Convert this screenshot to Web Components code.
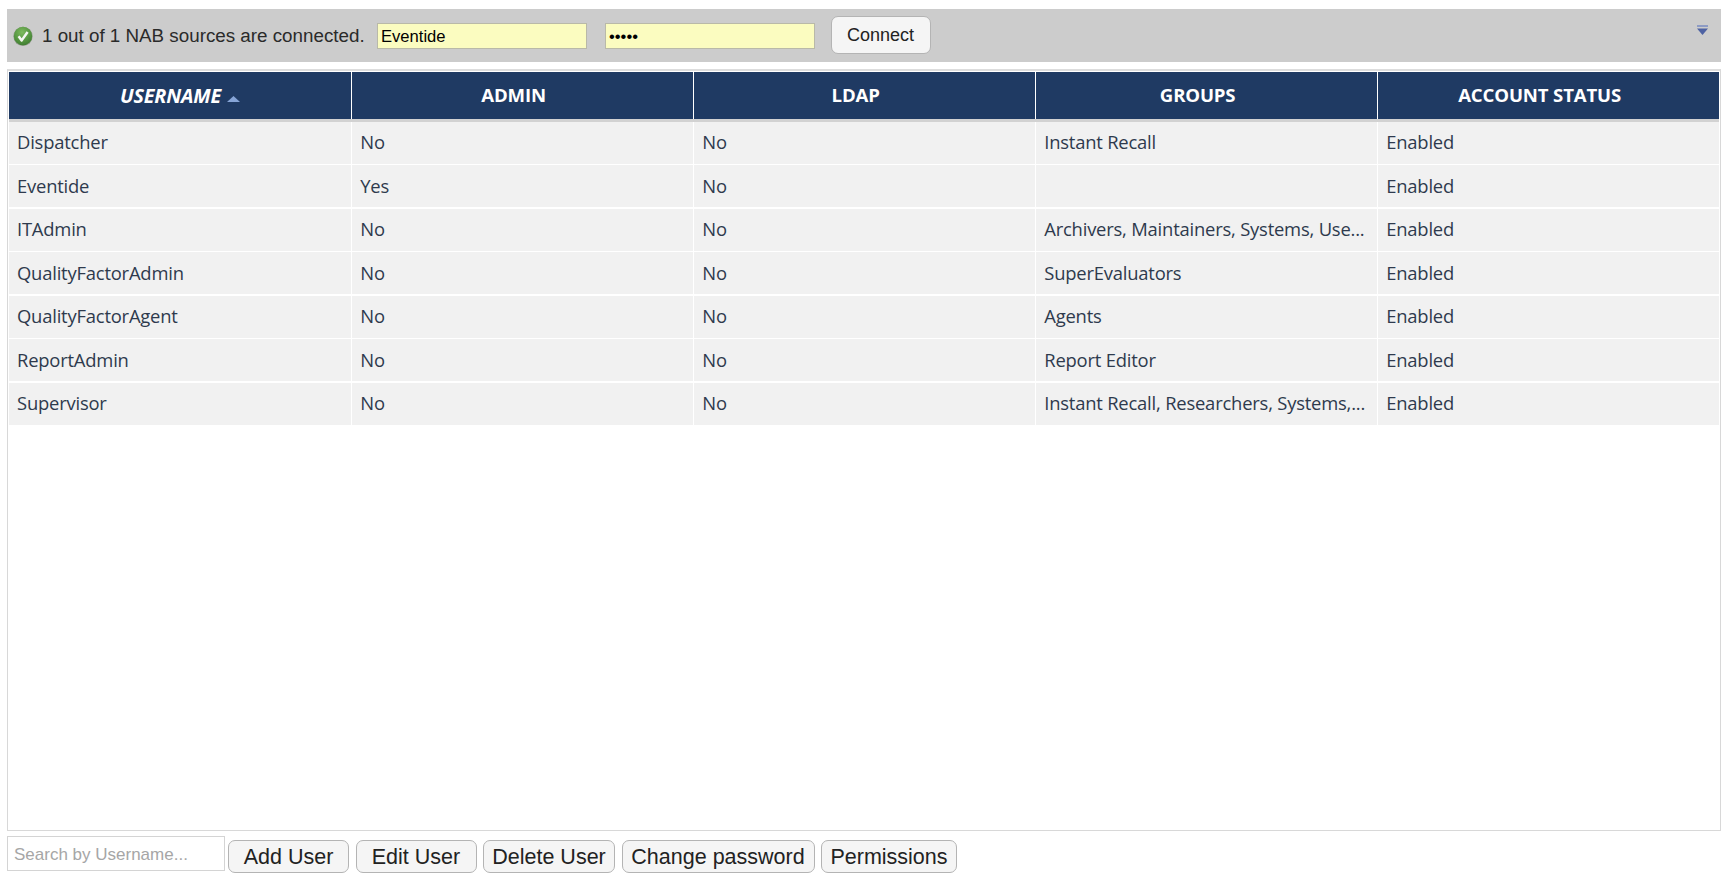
<!DOCTYPE html>
<html><head><meta charset="utf-8"><title>Users</title>
<style>
html,body{margin:0;height:100%;background:#fff}
body{width:1728px;height:881px;overflow:hidden;font-family:"Liberation Sans",Arial,sans-serif}
user-admin{display:block}
</style></head><body>
<user-admin></user-admin>
<script>
function def(name,html,init){customElements.define(name,class extends HTMLElement{
 connectedCallback(){if(this.shadowRoot)return;const r=this.attachShadow({mode:'open'});r.innerHTML=html;init&&init(r,this);}
});}
def('ui-button',`<style>
:host{display:block}
button{box-sizing:border-box;display:block;width:100%;height:100%;padding:var(--btn-pad,2px 0 0);margin:0;background:#f5f5f5;border:1.5px solid #b4b4b4;border-radius:7px;color:#222;font:var(--btn-font,21.5px "Liberation Sans",Arial,sans-serif);white-space:nowrap}
</style><button type="button"><slot></slot></button>`);
def('status-icon',`<style>:host{display:block;width:20px;height:20px}svg{display:block}</style>
<svg width="20" height="20" viewBox="0 0 20 20"><defs><radialGradient id="g" cx="45%" cy="30%" r="75%"><stop offset="0" stop-color="#7dba5e"/><stop offset=".7" stop-color="#4f8f3c"/><stop offset="1" stop-color="#3d7a30"/></radialGradient></defs>
<circle cx="10" cy="10.4" r="9.6" fill="#8f9a8a"/><circle cx="10" cy="10" r="9.2" fill="url(#g)"/><path d="M5.6 10.2l3.1 4.2 5.9-8.4" fill="none" stroke="#f4f6f2" stroke-width="2.5" stroke-linejoin="round"/></svg>`);
def('nab-bar',`<style>
:host{display:flex;box-sizing:border-box;margin:9px 7px 0 7px;height:53px;background:#ccc;align-items:center;padding-left:6px}
.msg{margin-left:9px;font-size:18.8px;color:#2a2a2a;width:335px;white-space:nowrap}
input{box-sizing:border-box;height:26px;width:209.5px;background:#fbfcc0;border:1px solid #b9b9a8;padding:3px 3px 0;margin:0;font:16.6px "Liberation Sans",Arial,sans-serif;color:#000;outline:0;border-radius:0}
input+input{margin-left:18.5px}
ui-button{width:100px;height:38px;margin:-1px 0 0 16px;--btn-pad:0;--btn-font:18px "Liberation Sans",Arial,sans-serif}
.tog{margin-left:auto;margin-right:13px;align-self:flex-start;margin-top:16px;width:11px;height:10px}
svg{display:block}
</style>
<status-icon></status-icon><span class="msg">1 out of 1 NAB sources are connected.</span>
<input value="Eventide" aria-label="Username"><input type="password" value="12345" aria-label="Password">
<ui-button>Connect</ui-button>
<div class="tog"><svg width="11" height="10" viewBox="0 0 11 10"><rect width="11" height="2" fill="#8d9bc4"/><path d="M0 3.5h11L5.5 10z" fill="#4e62a3"/></svg></div>`);
const cellFont=`"Open Sans","Noto Sans",sans-serif`;
def('grid-head',`<style>
:host{display:flex;box-sizing:border-box;height:46.5px;padding:0 18px 2px 0;background:#1f3a63;color:#fff;align-items:center;justify-content:center;font:700 18.6px ${cellFont};letter-spacing:-.15px;text-transform:uppercase;white-space:nowrap}
:host([sorted]){font-style:italic;padding:0 0 0 0;font-size:19.8px}
</style><slot></slot>`);
def('grid-cell',`<style>
:host{display:flex;align-items:center;box-sizing:border-box;min-width:0;height:42px;padding:0 2px 2px 8px;background:#f1f1f1;color:#2e3a4d;font:400 18.4px ${cellFont};letter-spacing:-.2px}
span{white-space:nowrap}
</style><span><slot></slot></span>`);
def('user-grid',`<style>
:host{display:block;box-sizing:border-box;height:762px;margin:7px 7px 0 7px;border:1px solid #d8d8d8;border-top:2px solid #ddd;padding:1px 1px 0 1px}
.head,.row{display:grid;grid-template-columns:342px repeat(4,1fr);column-gap:1.25px;width:1710px}
.head{background:#fff;border-bottom:3px solid #d2d2d2}
.rows{display:grid;row-gap:1.5px}
svg{margin-left:6px;margin-top:7px}
</style>
<div class="head"><grid-head sorted>Username<svg width="13" height="6" viewBox="0 0 13 6"><path d="M0 6L6.500 0l6.500 6z" fill="#86a4d6"/></svg></grid-head><grid-head>Admin</grid-head><grid-head>LDAP</grid-head><grid-head>Groups</grid-head><grid-head>Account Status</grid-head></div>
<div class="rows" id="r"></div>`,r=>{
 const d=[['Dispatcher','No','No','Instant Recall','Enabled'],['Eventide','Yes','No','','Enabled'],['ITAdmin','No','No','Archivers, Maintainers, Systems, Use...','Enabled'],['QualityFactorAdmin','No','No','SuperEvaluators','Enabled'],['QualityFactorAgent','No','No','Agents','Enabled'],['ReportAdmin','No','No','Report Editor','Enabled'],['Supervisor','No','No','Instant Recall, Researchers, Systems,...','Enabled']];
 r.getElementById('r').innerHTML=d.map(x=>`<div class="row">${x.map(c=>`<grid-cell>${c}</grid-cell>`).join('')}</div>`).join('');
});
def('action-bar',`<style>
:host{display:flex;margin:5px 0 0 7px;height:37px;align-items:flex-end}
input{box-sizing:border-box;width:218px;height:35px;margin:0 0 2px;border:1.5px solid #d4d4d4;padding:2px 6px 0;font:17px "Liberation Sans",Arial,sans-serif;outline:0;border-radius:0}
input::placeholder{color:#a6a6a6;opacity:1}
ui-button{height:33px;margin-left:6.5px}
.a{width:121px;margin-left:3px}.b{width:121px}.c{width:132px}.d{width:193px}.e{width:136px}
</style>
<input placeholder="Search by Username..."><ui-button class="a">Add User</ui-button><ui-button class="b">Edit User</ui-button><ui-button class="c">Delete User</ui-button><ui-button class="d">Change password</ui-button><ui-button class="e">Permissions</ui-button>`);
def('user-admin',`<style>:host{display:block}</style><nab-bar></nab-bar><user-grid></user-grid><action-bar></action-bar>`);
</script>
</body></html>
